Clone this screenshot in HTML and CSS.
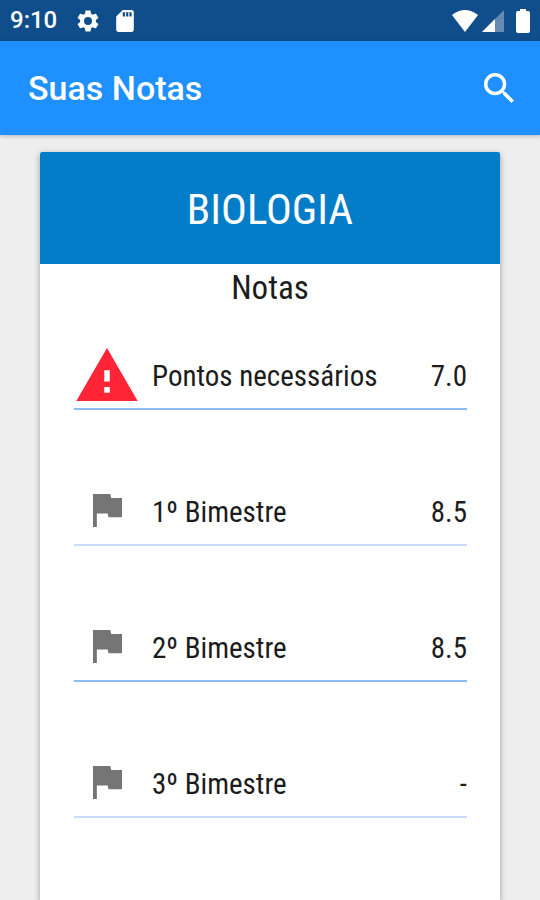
FILE: index.html
```html
<!DOCTYPE html>
<html lang="pt-BR">
<head>
<meta charset="utf-8">
<meta name="viewport" content="width=device-width, initial-scale=1">
<title>Suas Notas</title>
<link rel="stylesheet" href="styles.css">
</head>
<body>
<div class="status-bar">
  <time class="clock">9:10</time>
  <svg class="gear" viewBox="2 2 20 20" aria-hidden="true"><path d="M19.14 12.94c.04-.3.06-.61.06-.94s-.02-.64-.07-.94l2.03-1.58a.49.49 0 0 0 .12-.61l-1.92-3.32a.49.49 0 0 0-.59-.22l-2.39.96a7 7 0 0 0-1.62-.94l-.36-2.54A.48.48 0 0 0 13.920 2.400h-3.840a.47.47 0 0 0-.47.41l-.36 2.540c-.59.24-1.130.57-1.620.94l-2.390-.96a.48.48 0 0 0-.59.22L2.740 8.870a.47.47 0 0 0 .12.61l2.030 1.580c-.05.3-.09.63-.09.94s.02.64.07.94l-2.030 1.580a.49.49 0 0 0-.12.61l1.920 3.320c.12.22.37.29.59.22l2.390-.96c.5.38 1.030.7 1.620.94l.36 2.540c.05.24.24.41.48.41h3.840c.24 0 .44-.17.47-.41l.36-2.540a7 7 0 0 0 1.620-.94l2.390.96c.22.08.47 0 .59-.22l1.920-3.320a.47.47 0 0 0-.12-.61zM12 15.600a3.600 3.600 0 1 1 0-7.200 3.600 3.600 0 0 1 0 7.200z"/></svg>
  <svg class="sd-card" viewBox="4 2 16 20" aria-hidden="true"><path d="M18 2h-8L4.020 8 4 20c0 1.100.9 2 2 2h12c1.100 0 2-.9 2-2V4c0-1.100-.9-2-2-2zm-6 6h-2V4h2zm3 0h-2V4h2zm3 0h-2V4h2z"/></svg>
  <div class="signals">
    <svg class="wifi" viewBox="0 0 26 22" aria-hidden="true"><path d="M0 5Q13-5 26 5L13 22z"/></svg>
    <svg class="mobile" viewBox="0 0 22 22" aria-hidden="true"><path class="faint" d="M0 22 22 0v22z"/><path d="M0 22 13 9v13z"/></svg>
    <svg class="battery" viewBox="0 0 14 24" aria-hidden="true"><path d="M4 0h6v2h2q2 0 2 2v18q0 2-2 2H2q-2 0-2-2V4q0-2 2-2h2z"/></svg>
  </div>
</div>
<header class="app-bar">
  <h1 class="title">Suas Notas</h1>
  <button class="search" type="button" aria-label="Buscar">
    <svg viewBox="3 3 17.500 17.500" aria-hidden="true"><path d="M15.500 14h-.79l-.28-.27A6.470 6.470 0 0 0 16 9.500 6.500 6.500 0 1 0 9.500 16c1.610 0 3.090-.59 4.230-1.570l.27.28v.79l5 4.990L20.490 19zm-6 0a4.500 4.500 0 1 1 0-9 4.500 4.500 0 0 1 0 9z"/></svg>
  </button>
</header>
<main class="content">
  <article class="card">
    <h2 class="subject">BIOLOGIA</h2>
    <h3 class="section">Notas</h3>
    <ul class="grades">
      <li class="grade">
        <span class="icon"><svg class="warning" viewBox="1 2 22 19" aria-hidden="true"><path d="M1 21h22L12 2zm12-3h-2v-2h2zm0-4h-2v-4h2z"/></svg></span>
        <span class="label">Pontos necessários</span>
        <span class="value">7.0</span>
      </li>
      <li class="grade">
        <span class="icon"><svg class="flag" viewBox="5 4 15 17" aria-hidden="true"><path d="M14.400 6 14 4H5v17h2v-7h5.600l.4 2h7V6z"/></svg></span>
        <span class="label">1º Bimestre</span>
        <span class="value">8.5</span>
      </li>
      <li class="grade">
        <span class="icon"><svg class="flag" viewBox="5 4 15 17" aria-hidden="true"><path d="M14.400 6 14 4H5v17h2v-7h5.600l.4 2h7V6z"/></svg></span>
        <span class="label">2º Bimestre</span>
        <span class="value">8.5</span>
      </li>
      <li class="grade">
        <span class="icon"><svg class="flag" viewBox="5 4 15 17" aria-hidden="true"><path d="M14.400 6 14 4H5v17h2v-7h5.600l.4 2h7V6z"/></svg></span>
        <span class="label">3º Bimestre</span>
        <span class="value">-</span>
      </li>
    </ul>
  </article>
</main>
</body>
</html>
```
FILE: styles.css
```css
* {
  box-sizing: border-box;
}

body {
  display: flex;
  flex-direction: column;
  min-height: 100vh;
  margin: 0;
  background: #eee;
  color: #1c1c1c;
  font-family: Roboto, sans-serif;
}

svg {
  display: block;
  fill: currentColor;
}

h1, h2, h3, ul {
  margin: 0;
  padding: 0;
  font-weight: 400;
}

.status-bar {
  display: flex;
  align-items: center;
  padding: 0 10px;
  background: #104e8b;
  color: #fff;
  line-height: 41px;
}

.clock {
  margin-right: 20px;
  font-size: 24px;
  font-weight: 500;
}

.gear {
  width: 22px;
  height: 22px;
  margin-right: 17px;
}

.sd-card {
  width: 18px;
  height: 22px;
}

.signals {
  display: flex;
  align-items: center;
  margin-left: auto;
}

.wifi {
  width: 26px;
  height: 22px;
  margin-right: 4px;
}

.mobile {
  width: 22px;
  height: 22px;
  margin-right: 12px;
}

.faint {
  opacity: 0.35;
}

.battery {
  width: 14px;
  height: 24px;
}

.app-bar {
  position: relative;
  display: flex;
  align-items: center;
  justify-content: space-between;
  padding: 0 26px 0 28px;
  background: #1e90ff;
  box-shadow: 0 1px 4px rgba(0, 0, 0, 0.25);
  color: #fff;
}

.title {
  font-size: 34px;
  font-weight: 500;
  line-height: 94px;
}

.search {
  padding: 0;
  border: 0;
  background: none;
  color: inherit;
}

.search svg {
  width: 30px;
  height: 30px;
}

.content {
  display: flex;
  flex: 1;
  flex-direction: column;
  padding: 17px 40px 0;
}

.card {
  flex: 1;
  border-radius: 2px 2px 0 0;
  background: #fff;
  box-shadow: 0 2px 6px rgba(0, 0, 0, 0.35);
  font-family: "Roboto Condensed", Roboto, sans-serif;
}

.subject {
  padding-top: 2px;
  border-radius: 2px 2px 0 0;
  background: #037dc8;
  color: #fff;
  font-size: 43px;
  line-height: 110px;
  text-align: center;
}

.section {
  font-size: 33px;
  line-height: 48px;
  text-align: center;
}

.grades {
  display: grid;
  gap: 72px;
  padding: 34px 33px 0 34px;
  list-style: none;
}

.grade {
  display: flex;
  align-items: center;
  height: 64px;
  padding-bottom: 2px;
  border-bottom: 2px solid #c9dafa;
  font-size: 29px;
}

.grade:nth-child(odd) {
  border-bottom-color: #8fbcf7;
}

.icon {
  display: flex;
  justify-content: center;
  width: 66px;
  margin-right: 12px;
  padding-bottom: 3px;
}

.warning {
  width: 62px;
  height: 53px;
  color: #ff2436;
}

.flag {
  width: 29px;
  height: 33px;
  color: #757575;
}

.value {
  margin-left: auto;
}
```
